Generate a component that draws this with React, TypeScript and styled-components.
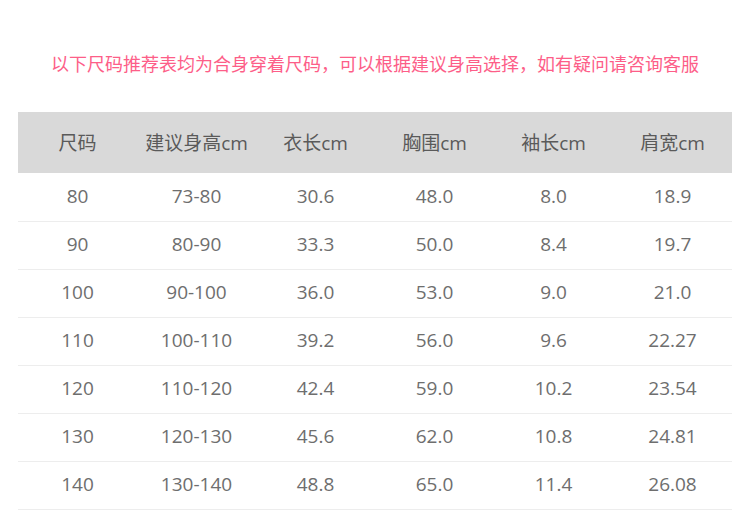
import styled, { createGlobalStyle } from 'styled-components'

const GlobalStyle = createGlobalStyle`
  body {
    margin: 0;
    background: #fff;
    font-family: "Open Sans", "Noto Sans CJK SC", sans-serif;
  }
`

const Page = styled.div`
  width: 750px;
  height: 510px;
  overflow: hidden;
  display: flex;
  flex-direction: column;
`

const Notice = styled.p`
  margin: 51px 0 0;
  height: 24px;
  line-height: 24px;
  text-align: center;
  font-family: "Noto Sans CJK SC", sans-serif;
  font-size: 18px;
  color: #fd5e88;
  white-space: nowrap;
`

const Table = styled.div`
  margin: 37px 0 0 18px;
  width: 714px;
  display: flex;
  flex-direction: column;
`

const HeadRow = styled.div`
  display: grid;
  grid-template-columns: repeat(6, 1fr);
  align-items: center;
  height: 61px;
  margin-bottom: 1px;
  background: #d9d9d9;
`

const Row = styled.div`
  display: grid;
  grid-template-columns: repeat(6, 1fr);
  align-items: center;
  height: 48px;
  padding-bottom: 3px;
  box-sizing: border-box;
  border-bottom: 1px solid #ededed;
`

const Cell = styled.div<{ $head?: boolean }>`
  text-align: center;
  font-size: 19px;
  line-height: 24px;
  color: ${({ $head }) => ($head ? '#5a5a5a' : '#6e6e6e')};
`

const headers = ['尺码', '建议身高cm', '衣长cm', '胸围cm', '袖长cm', '肩宽cm']

const rows = [
  ['80', '73-80', '30.6', '48.0', '8.0', '18.9'],
  ['90', '80-90', '33.3', '50.0', '8.4', '19.7'],
  ['100', '90-100', '36.0', '53.0', '9.0', '21.0'],
  ['110', '100-110', '39.2', '56.0', '9.6', '22.27'],
  ['120', '110-120', '42.4', '59.0', '10.2', '23.54'],
  ['130', '120-130', '45.6', '62.0', '10.8', '24.81'],
  ['140', '130-140', '48.8', '65.0', '11.4', '26.08'],
]

export default function App() {
  return (
    <Page>
      <GlobalStyle />
      <Notice>以下尺码推荐表均为合身穿着尺码，可以根据建议身高选择，如有疑问请咨询客服</Notice>
      <Table>
        <HeadRow>
          {headers.map((h) => (
            <Cell $head key={h}>
              {h}
            </Cell>
          ))}
        </HeadRow>
        {rows.map((r) => (
          <Row key={r[0]}>
            {r.map((v, i) => (
              <Cell key={i}>{v}</Cell>
            ))}
          </Row>
        ))}
      </Table>
    </Page>
  )
}
